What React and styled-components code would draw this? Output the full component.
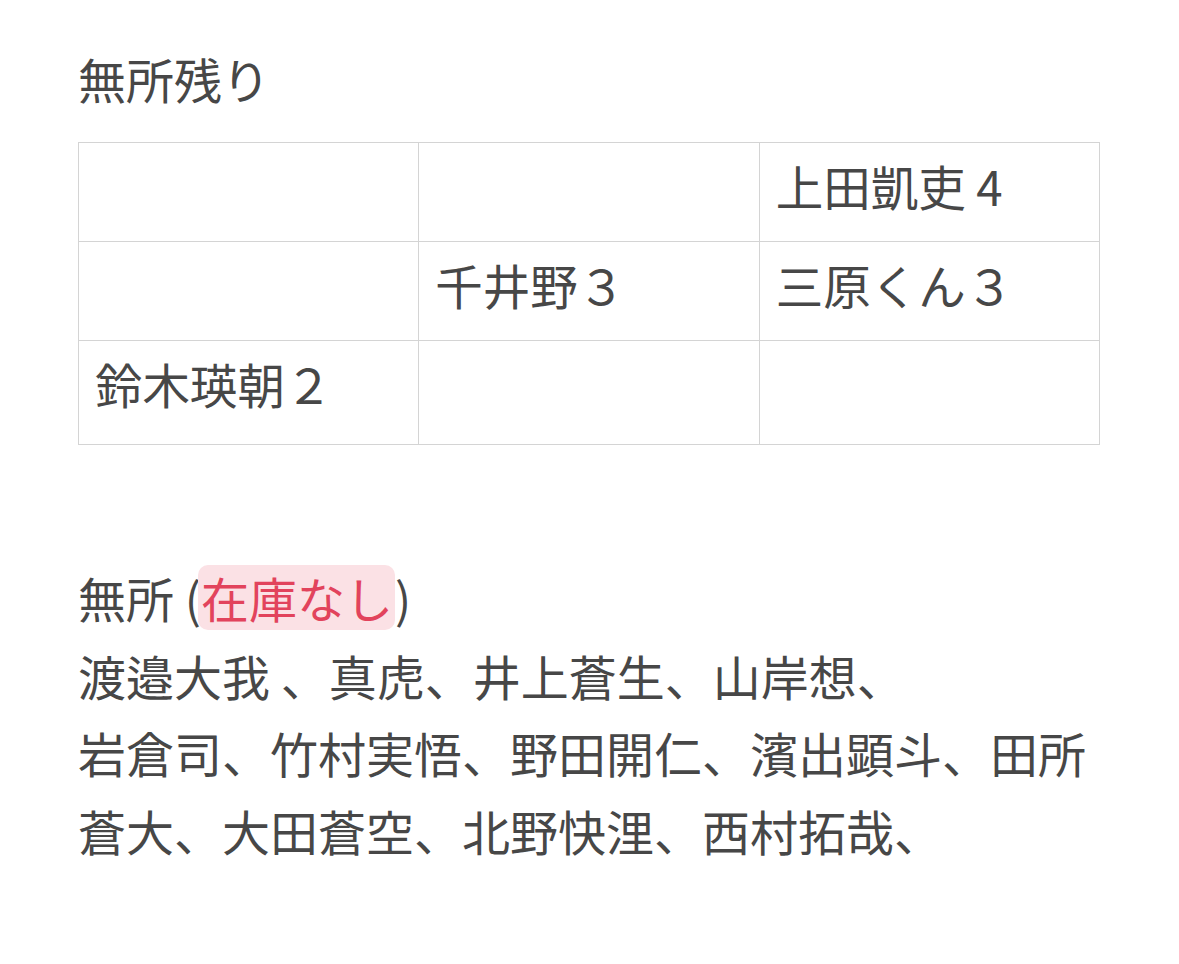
import React from 'react';
import styled, { createGlobalStyle } from 'styled-components';

const GlobalStyle = createGlobalStyle`
  html, body {
    margin: 0;
    padding: 0;
    background: #ffffff;
  }
  body {
    font-family: "Noto Sans CJK JP", "Noto Sans", sans-serif;
    color: #474747;
  }
`;

const rows = [
  ['', '', '上田凱吏 4'],
  ['', '千井野３', '三原くん３'],
  ['鈴木瑛朝２', '', ''],
];

const App = () => {
  return (
    <Page>
      <GlobalStyle />
      <Title>無所残り</Title>
      <Grid>
        <tbody>
          {rows.map((row, i) => (
            <tr key={i}>
              {row.map((cell, j) => (
                <Cell key={j}>{cell}</Cell>
              ))}
            </tr>
          ))}
        </tbody>
      </Grid>
      <Section>
        <Line>
          無所 (<Mark>在庫なし</Mark>)
        </Line>
        <Line>渡邉大我 、真虎、井上蒼生、山岸想、</Line>
        <Line>岩倉司、竹村実悟、野田開仁、濱出顕斗、田所蒼大、大田蒼空、北野快浬、西村拓哉、</Line>
      </Section>
    </Page>
  );
};

export default App;

const Page = styled.div`
  width: 1022px;
  padding: 39px 0 40px 78px;
  font-size: 48px;
`;

const Title = styled.div`
  line-height: 78px;
  margin-bottom: 25px;
`;

const Grid = styled.table`
  width: 100%;
  table-layout: fixed;
  border-collapse: collapse;

  tr:last-child td {
    padding-bottom: 27px;
  }
`;

const Cell = styled.td`
  border: 1px solid #d4d4d4;
  padding: 10px 16px 22px;
  height: 66px;
  line-height: 66px;
  font-size: 47.5px;
  vertical-align: middle;
`;

const Section = styled.div`
  margin-top: 114px;
  line-height: 77.5px;
`;

const Line = styled.div`
  word-break: break-all;
`;

const Mark = styled.span`
  display: inline-block;
  line-height: 65px;
  margin-left: -3px;
  padding: 0 2px 0 3px;
  border-radius: 10px;
  background: #fbe1e5;
  color: #e2435c;
  vertical-align: baseline;
`;
